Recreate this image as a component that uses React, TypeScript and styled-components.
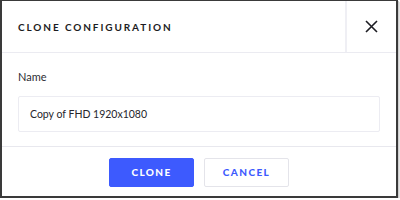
import React from "react";
import styled, { createGlobalStyle } from "styled-components";

const Global = createGlobalStyle`
  html, body { margin: 0; padding: 0; background: #ffffff; }
  body { font-family: Lato, "Open Sans", sans-serif; }
`;

const Dialog = styled.div`
  box-sizing: border-box;
  width: 398px;
  height: 198px;
  border: 2px solid #3a3a3a;
  border-top-width: 1px;
  background: #fff;
  display: flex;
  flex-direction: column;
  box-shadow: 1px 1px 0 #cfcfcf, 2px 2px 0 #e6e6e6;
`;

const Header = styled.div`
  display: flex;
  height: 52px;
  box-sizing: border-box;
  border-bottom: 1px solid #ebebf1;
`;

const Title = styled.h1`
  flex: 1;
  margin: 0;
  padding-left: 16px;
  padding-top: 1px;
  display: flex;
  align-items: center;
  font-size: 10px;
  font-weight: 700;
  letter-spacing: 1.9px;
  color: #1c1c22;
`;

const CloseButton = styled.button`
  width: 51px;
  border: none;
  border-left: 2px solid #efeff4;
  background: #fff;
  padding: 0;
  display: flex;
  align-items: center;
  justify-content: center;
  cursor: pointer;
`;

const Body = styled.div`
  flex: 1;
  padding: 17px 16px 0 16px;
  border-bottom: 1px solid #e8e8ee;
  box-sizing: border-box;
`;

const Label = styled.label`
  display: block;
  font-size: 11px;
  color: #2d2d33;
  line-height: 14px;
  margin-bottom: 12px;
`;

const Input = styled.div`
  box-sizing: border-box;
  height: 36px;
  border: 1px solid #ececf2;
  border-radius: 2px;
  padding-left: 11px;
  display: flex;
  align-items: center;
  font-size: 10.5px;
  color: #26262c;
`;

const Footer = styled.div`
  height: 49px;
  display: flex;
  align-items: center;
  justify-content: center;
  gap: 10px;
  padding-top: 1px;
  box-sizing: border-box;
`;

const Button = styled.button<{ $primary?: boolean }>`
  box-sizing: border-box;
  width: 85px;
  height: 29px;
  border-radius: 2px;
  border: 1px solid ${(p) => (p.$primary ? "#3d5afe" : "#e4e4ea")};
  background: ${(p) => (p.$primary ? "#3d5afe" : "#ffffff")};
  color: ${(p) => (p.$primary ? "#ffffff" : "#3d5afe")};
  font-family: Lato, sans-serif;
  font-size: 10px;
  font-weight: 900;
  letter-spacing: 1.4px;
  padding: 0;
  cursor: pointer;
`;

export default function App() {
  return (
    <>
      <Global />
      <Dialog>
        <Header>
          <Title>CLONE CONFIGURATION</Title>
          <CloseButton aria-label="Close">
            <svg width="13" height="13" viewBox="0 0 13 13">
              <path d="M1 1 L12 12 M12 1 L1 12" stroke="#1c1c22" strokeWidth="1.6" fill="none" />
            </svg>
          </CloseButton>
        </Header>
        <Body>
          <Label>Name</Label>
          <Input>Copy of FHD 1920x1080</Input>
        </Body>
        <Footer>
          <Button $primary>CLONE</Button>
          <Button>CANCEL</Button>
        </Footer>
      </Dialog>
    </>
  );
}
